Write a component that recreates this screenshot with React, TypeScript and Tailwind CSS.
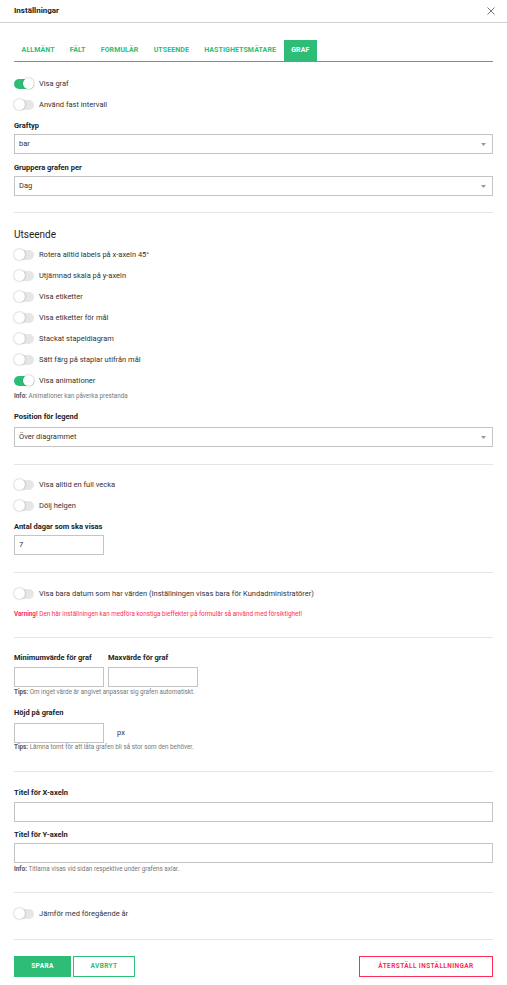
import { ReactNode } from 'react';

const font = { fontFamily: 'Roboto, "Liberation Sans", sans-serif' };

const tabs = ['Allmänt', 'Fält', 'Formulär', 'Utseende', 'Hastighetsmätare', 'Graf'];

function Toggle({ on = false, label }: { on?: boolean; label: string }) {
    return (
        <div className="h-[21px] flex items-center">
            <span
                className={`relative w-[20px] h-[10px] rounded-full ${on ? 'bg-[#2dbd77]' : 'bg-[#e6e6e6]'}`}
            >
                <span
                    className={`absolute top-[-0.5px] w-[11px] h-[11px] rounded-full bg-white shadow-[0_0_2px_rgba(0,0,0,0.35)] ${on ? 'left-[9px]' : 'left-0'}`}
                />
            </span>
            <span className="ml-[5px] text-[7.5px] text-[#333]">{label}</span>
        </div>
    );
}

function Label({ children, className = '' }: { children: ReactNode; className?: string }) {
    return <div className={`text-[7.5px] leading-[10px] font-bold text-[#222] ${className}`}>{children}</div>;
}

function Select({ value }: { value: string }) {
    return (
        <div className="h-[20px] border border-[#c4c4c4] flex items-center justify-between pl-[4px] pr-[6px]">
            <span className="text-[7.5px] text-[#333]">{value}</span>
            <svg width="5" height="3" viewBox="0 0 5 3">
                <path d="M0 0h5L2.5 3z" fill="#9a9a9a" />
            </svg>
        </div>
    );
}

function Note({ tag, children, className = '' }: { tag: string; children: ReactNode; className?: string }) {
    return (
        <div className={`text-[6.3px] leading-[9px] text-[#777] ${className}`}>
            <span className="font-bold text-[#555]">{tag}</span> {children}
        </div>
    );
}

function Divider({ className = '' }: { className?: string }) {
    return <div className={`h-px bg-[#e6e6e6] ${className}`} />;
}

export default function App() {
    return (
        <div className="w-[507px] min-h-[985px] bg-white" style={font}>
            <header className="h-[23px] border-b border-[#cfcfcf] flex items-center justify-between px-[14px]">
                <span className="text-[8px] font-bold text-[#222]">Inställningar</span>
                <svg width="8" height="8" viewBox="0 0 8 8" className="mr-[-2px]">
                    <path d="M0.5 0.5l7 7M7.5 0.5l-7 7" stroke="#555" strokeWidth="0.8" />
                </svg>
            </header>

            <div className="px-[14px]">
                <nav className="mt-[17px] h-[22px] border-b-[1.5px] border-[#2dbd77] flex">
                    {tabs.map((t) => (
                        <span
                            key={t}
                            className={`px-[7.6px] flex items-center uppercase font-bold text-[7px] tracking-[0.1px] ${t === 'Graf' ? 'bg-[#2dbd77] text-white' : 'text-[#2dbd77]'}`}
                        >
                            {t}
                        </span>
                    ))}
                </nav>

                <div className="mt-[11px]">
                    <Toggle on label="Visa graf" />
                    <Toggle label="Använd fast intervall" />
                </div>

                <Label className="mt-[6px] mb-[3px]">Graftyp</Label>
                <Select value="bar" />
                <Label className="mt-[9px] mb-[3px]">Gruppera grafen per</Label>
                <Select value="Dag" />

                <Divider className="mt-[16px]" />

                <div className="mt-[16px] text-[10px] leading-[12px] text-[#222]">Utseende</div>
                <div className="mt-[3px]">
                    <Toggle label="Rotera alltid labels på x-axeln 45°" />
                    <Toggle label="Utjämnad skala på y-axeln" />
                    <Toggle label="Visa etiketter" />
                    <Toggle label="Visa etiketter för mål" />
                    <Toggle label="Stackat stapeldiagram" />
                    <Toggle label="Sätt färg på staplar utifrån mål" />
                    <Toggle on label="Visa animationer" />
                </div>
                <Note tag="Info:" className="mt-[1px]">Animationer kan påverka prestanda</Note>

                <Label className="mt-[11px] mb-[5px]">Position för legend</Label>
                <Select value="Över diagrammet" />

                <Divider className="mt-[17px]" />

                <div className="mt-[9px]">
                    <Toggle label="Visa alltid en full vecka" />
                    <Toggle label="Dölj helgen" />
                </div>
                <Label className="mt-[6px] mb-[3px]">Antal dagar som ska visas</Label>
                <div className="w-[90px] h-[20px] border border-[#c4c4c4] flex items-center pl-[4px] text-[7.5px] text-[#333]">
                    7
                </div>

                <Divider className="mt-[17px]" />

                <div className="mt-[10px]">
                    <Toggle label="Visa bara datum som har värden (Inställningen visas bara för Kundadministratörer)" />
                </div>
                <div className="mt-[6px] text-[6.3px] leading-[9px] text-[#ff2d55]">
                    <span className="font-bold">Varning!</span> Den här inställningen kan medföra konstiga bieffekter på formulär så använd med försiktighet!
                </div>

                <Divider className="mt-[18px]" />

                <div className="mt-[15px] flex gap-[4px]">
                    <div className="w-[90px]">
                        <Label className="mb-[4px]">Minimumvärde för graf</Label>
                        <div className="h-[20px] border border-[#c4c4c4]" />
                    </div>
                    <div className="w-[90px]">
                        <Label className="mb-[4px]">Maxvärde för graf</Label>
                        <div className="h-[20px] border border-[#c4c4c4]" />
                    </div>
                </div>
                <Note tag="Tips:" className="mt-[1px]">Om inget värde är angivet anpassar sig grafen automatiskt.</Note>

                <Label className="mt-[11px] mb-[5px]">Höjd på grafen</Label>
                <div className="flex items-center">
                    <div className="w-[90px] h-[20px] border border-[#c4c4c4]" />
                    <span className="ml-[13px] text-[7.5px] text-[#333]">px</span>
                </div>
                <Note tag="Tips:">Lämna tomt för att låta grafen bli så stor som den behöver.</Note>

                <Divider className="mt-[19px]" />

                <Label className="mt-[16px] mb-[4px]">Titel för X-axeln</Label>
                <div className="h-[20px] border border-[#c4c4c4]" />
                <Label className="mt-[8px] mb-[3px]">Titel för Y-axeln</Label>
                <div className="h-[20px] border border-[#c4c4c4]" />
                <Note tag="Info:" className="mt-[2px]">Titlarna visas vid sidan respektive under grafens axlar.</Note>

                <Divider className="mt-[18px]" />

                <div className="mt-[10px]">
                    <Toggle label="Jämför med föregående år" />
                </div>

                <Divider className="mt-[15px]" />

                <div className="mt-[16px] flex items-center">
                    <button className="w-[57px] h-[21px] bg-[#2dbd77] text-white text-[6.5px] font-bold tracking-[0.4px]">
                        SPARA
                    </button>
                    <button className="ml-[2px] w-[62px] h-[21px] border border-[#2dbd77] text-[#2dbd77] text-[6.5px] font-bold tracking-[0.4px]">
                        AVBRYT
                    </button>
                    <button className="ml-auto w-[134px] h-[21px] border border-[#ff2d55] text-[#ff2d55] text-[6.5px] font-bold tracking-[0.4px]">
                        ÅTERSTÄLL INSTÄLLNINGAR
                    </button>
                </div>
            </div>
        </div>
    );
}
